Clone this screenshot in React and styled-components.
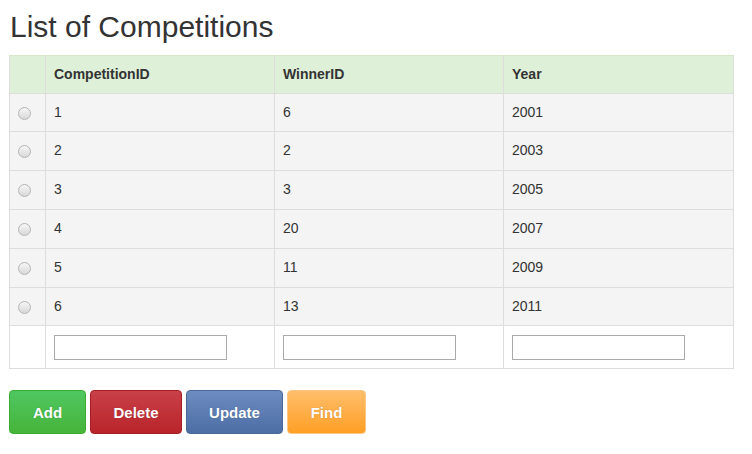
import React from "react";
import styled, { createGlobalStyle } from "styled-components";

const Global = createGlobalStyle`
  body { margin: 0; background: #fff; font-family: "Liberation Sans", Arial, sans-serif; color: #333; }
`;

const Page = styled.div`
  padding: 0 9px;
`;

const Title = styled.h1`
  margin: 10px 0 0 1px;
  font-size: 30px;
  line-height: 33px;
  font-weight: 400;
  color: #333;
  height: 45px;
  box-sizing: border-box;
`;

const Table = styled.table`
  border-collapse: collapse;
  width: 724px;
  table-layout: fixed;
  font-size: 14px;
`;

const HeadRow = styled.tr`
  height: 38px;
  background: #dff0d8;
`;

const Row = styled.tr`
  height: ${(p) => p.$h}px;
  background: ${(p) => (p.$plain ? "#fff" : "#f4f4f4")};
`;

const Th = styled.th`
  border: 1px solid #dddddd;
  border-top-color: #d6e9c6;
  text-align: left;
  padding: 0 8px 1px;
  font-weight: 700;
  font-size: 14px;
  color: #333;
`;

const Td = styled.td`
  border: 1px solid #dddddd;
  padding: 0 8px 2px;
  color: #333;
  vertical-align: middle;
`;

const Radio = styled.span`
  display: inline-block;
  width: 11px;
  height: 11px;
  border-radius: 50%;
  border: 1px solid #b5b5b5;
  background: linear-gradient(#f6f6f6, #d8d8d8);
  vertical-align: middle;
  margin: 1px 0 0 0;
`;

const Input = styled.input`
  box-sizing: border-box;
  width: 173px;
  height: 25px;
  border: 1px solid #aaa;
  margin: 0;
  padding: 0 4px;
  background: #fff;
  display: block;
  margin-top: 2px;
`;

const Buttons = styled.div`
  display: flex;
  gap: 4px;
  margin-top: 21px;
`;

const palette = {
  green: { top: "#4fc761", bottom: "#46b43a", border: "#3aad30" },
  red: { top: "#c94048", bottom: "#b9242a", border: "#a51c22" },
  blue: { top: "#6d8cc0", bottom: "#4c6ea5", border: "#4a6898" },
  orange: { top: "#ffbe6a", bottom: "#ff9f26", border: "#ffc585" },
};

const Button = styled.button`
  box-sizing: border-box;
  height: 44px;
  width: ${(p) => p.$w}px;
  border-radius: 4px;
  border: 1px solid ${(p) => palette[p.$c].border};
  background: linear-gradient(${(p) => palette[p.$c].top}, ${(p) => palette[p.$c].bottom});
  color: #fff;
  font-family: "Liberation Sans", Arial, sans-serif;
  font-weight: 700;
  font-size: 15px;
  padding: 0;
  text-shadow: 0 0 1px rgba(0,0,0,0.25);
`;

const rows = [
  [1, 6, 2001],
  [2, 2, 2003],
  [3, 3, 2005],
  [4, 20, 2007],
  [5, 11, 2009],
  [6, 13, 2011],
];
const heights = [38, 39, 39, 39, 39, 38];

export default function App() {
  return (
    <Page>
      <Global />
      <Title>List of Competitions</Title>
      <Table>
        <colgroup>
          <col style={{ width: 36 }} />
          <col style={{ width: 229 }} />
          <col style={{ width: 229 }} />
          <col style={{ width: 230 }} />
        </colgroup>
        <thead>
          <HeadRow>
            <Th />
            <Th>CompetitionID</Th>
            <Th>WinnerID</Th>
            <Th>Year</Th>
          </HeadRow>
        </thead>
        <tbody>
          {rows.map((r, i) => (
            <Row key={i} $h={heights[i]}>
              <Td><Radio /></Td>
              <Td>{r[0]}</Td>
              <Td>{r[1]}</Td>
              <Td>{r[2]}</Td>
            </Row>
          ))}
          <Row $plain $h={43}>
            <Td />
            <Td><Input /></Td>
            <Td><Input /></Td>
            <Td><Input /></Td>
          </Row>
        </tbody>
      </Table>
      <Buttons>
        <Button $c="green" $w={77}>Add</Button>
        <Button $c="red" $w={92}>Delete</Button>
        <Button $c="blue" $w={97}>Update</Button>
        <Button $c="orange" $w={79}>Find</Button>
      </Buttons>
    </Page>
  );
}
